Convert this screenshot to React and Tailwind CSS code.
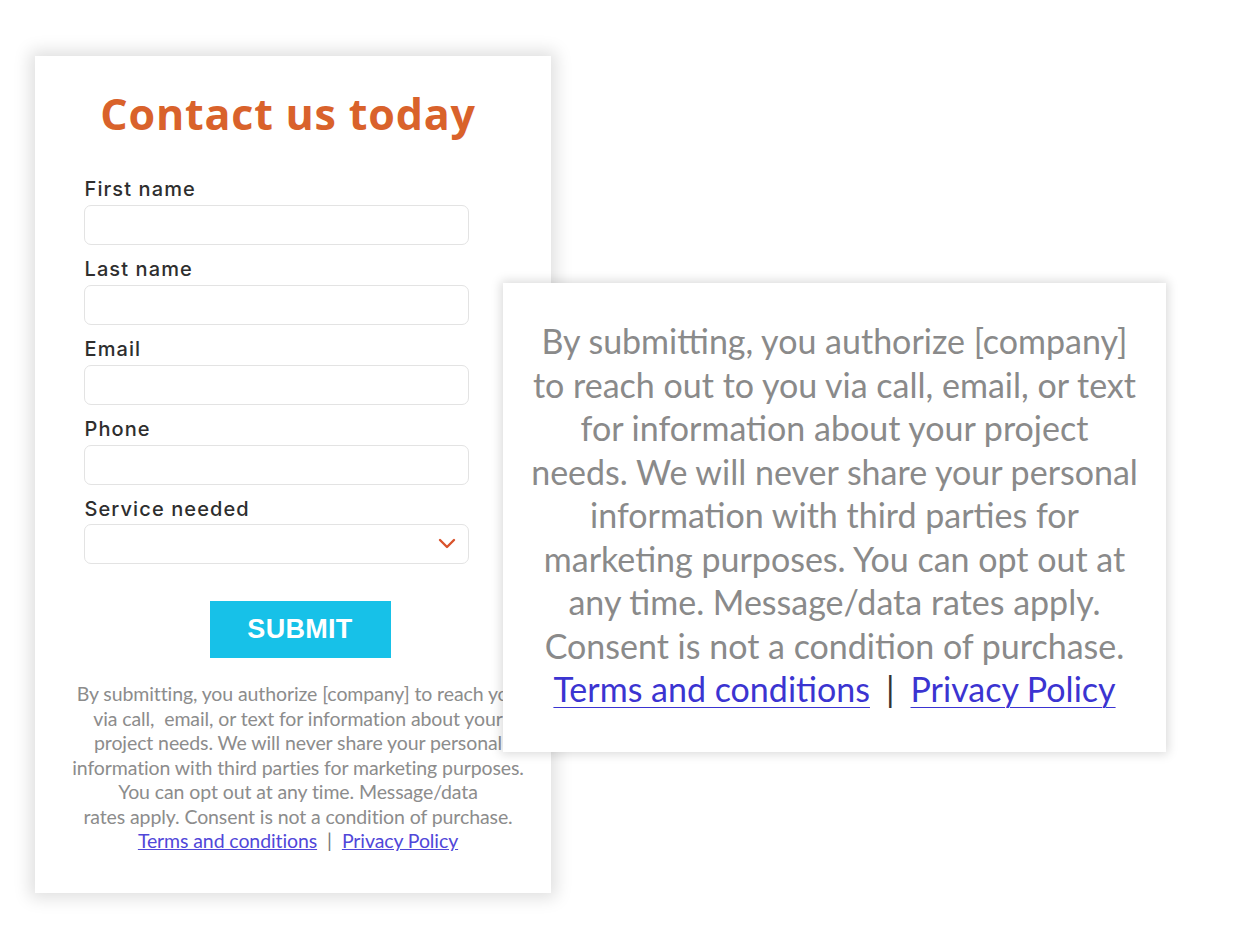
import React from 'react';

const fields = ['First name', 'Last name', 'Email', 'Phone'];

const Chevron = () => (
  <svg width="18" height="12" viewBox="0 0 18 12" fill="none">
    <path d="M2 2l7 7 7-7" stroke="#d9532c" strokeWidth="2.4" strokeLinecap="round" strokeLinejoin="round" />
  </svg>
);

const smallLines = [
  'By submitting, you authorize [company] to reach you',
  'via call,  email, or text for information about your',
  'project needs. We will never share your personal',
  'information with third parties for marketing purposes.',
  'You can opt out at any time. Message/data',
  'rates apply. Consent is not a condition of purchase.',
];

const bigLines = [
  'By submitting, you authorize [company]',
  'to reach out to you via call, email, or text',
  'for information about your project',
  'needs. We will never share your personal',
  'information with third parties for',
  'marketing purposes. You can opt out at',
  'any time. Message/data rates apply.',
  'Consent is not a condition of purchase.',
];

const App = () => {
  return (
    <div className="relative w-[1248px] h-[950px] bg-white overflow-hidden">
      {/* form card */}
      <div className="ml-[35px] mt-[56px] w-[516px] h-[837px] bg-white shadow-[0_0_16px_5px_rgba(0,0,0,0.13)] flex flex-col items-center">
        <h1 className="mt-[30px] text-[43px] leading-[56px] font-bold text-[#d9622b] tracking-[0.8px] ml-[-10px]" style={{ fontFamily: '"Open Sans", sans-serif' }}>
          Contact us today
        </h1>

        <div className="w-[385px] ml-[-34px] mt-[35px] flex flex-col" style={{ fontFamily: 'Inter, sans-serif' }}>
          {fields.map((f) => (
            <div key={f} className="flex flex-col">
              <label className="text-[20px] leading-[24px] font-medium text-[#2e2e2e] tracking-[1.1px] pl-[1px]">{f}</label>
              <div className="mt-[4px] mb-[12px] h-[40px] rounded-[7px] border border-[#e3e3e3] bg-white" />
            </div>
          ))}
          <div className="flex flex-col">
            <label className="text-[20px] leading-[24px] font-medium text-[#2e2e2e] tracking-[1.1px] pl-[1px]">Service needed</label>
            <div className="mt-[3px] h-[40px] rounded-[7px] border border-[#e3e3e3] bg-white flex items-center justify-end pr-[12px]">
              <Chevron />
            </div>
          </div>
        </div>

        <button className="mt-[37px] ml-[14px] w-[181px] h-[57px] bg-[#17c1e8] text-white text-[27px] font-bold tracking-[0.3px]" style={{ fontFamily: '"Liberation Sans", Arial, sans-serif' }}>
          SUBMIT
        </button>

        <div className="mt-[24px] ml-[10px] text-center text-[19.5px] leading-[24.5px] text-[#8c8c8c] tracking-[-0.1px]" style={{ fontFamily: 'Lato, sans-serif' }}>
          {smallLines.map((l) => (
            <div key={l} className="whitespace-pre">{l}</div>
          ))}
          <div className="text-[#5147d9]">
            <span className="underline">Terms and conditions</span>
            <span className="text-[#777] mx-[10px]">|</span>
            <span className="underline">Privacy Policy</span>
          </div>
        </div>
      </div>

      {/* zoomed disclaimer */}
      <div className="absolute left-[503px] top-[283px] w-[663px] h-[469px] bg-white shadow-[0_0_10px_2px_rgba(0,0,0,0.15)] flex flex-col items-center pt-[36px]" style={{ fontFamily: 'Lato, sans-serif' }}>
        <div className="text-center text-[34px] leading-[43.5px] text-[#8a8a8a] whitespace-nowrap">
          {bigLines.map((l) => (
            <div key={l}>{l}</div>
          ))}
          <div className="text-[#3b34d1]">
            <span className="underline decoration-1 underline-offset-[5px]">Terms and conditions</span>
            <span className="text-[#333] mx-[16px]">|</span>
            <span className="underline decoration-1 underline-offset-[5px]">Privacy Policy</span>
          </div>
        </div>
      </div>
    </div>
  );
};

export default App;
